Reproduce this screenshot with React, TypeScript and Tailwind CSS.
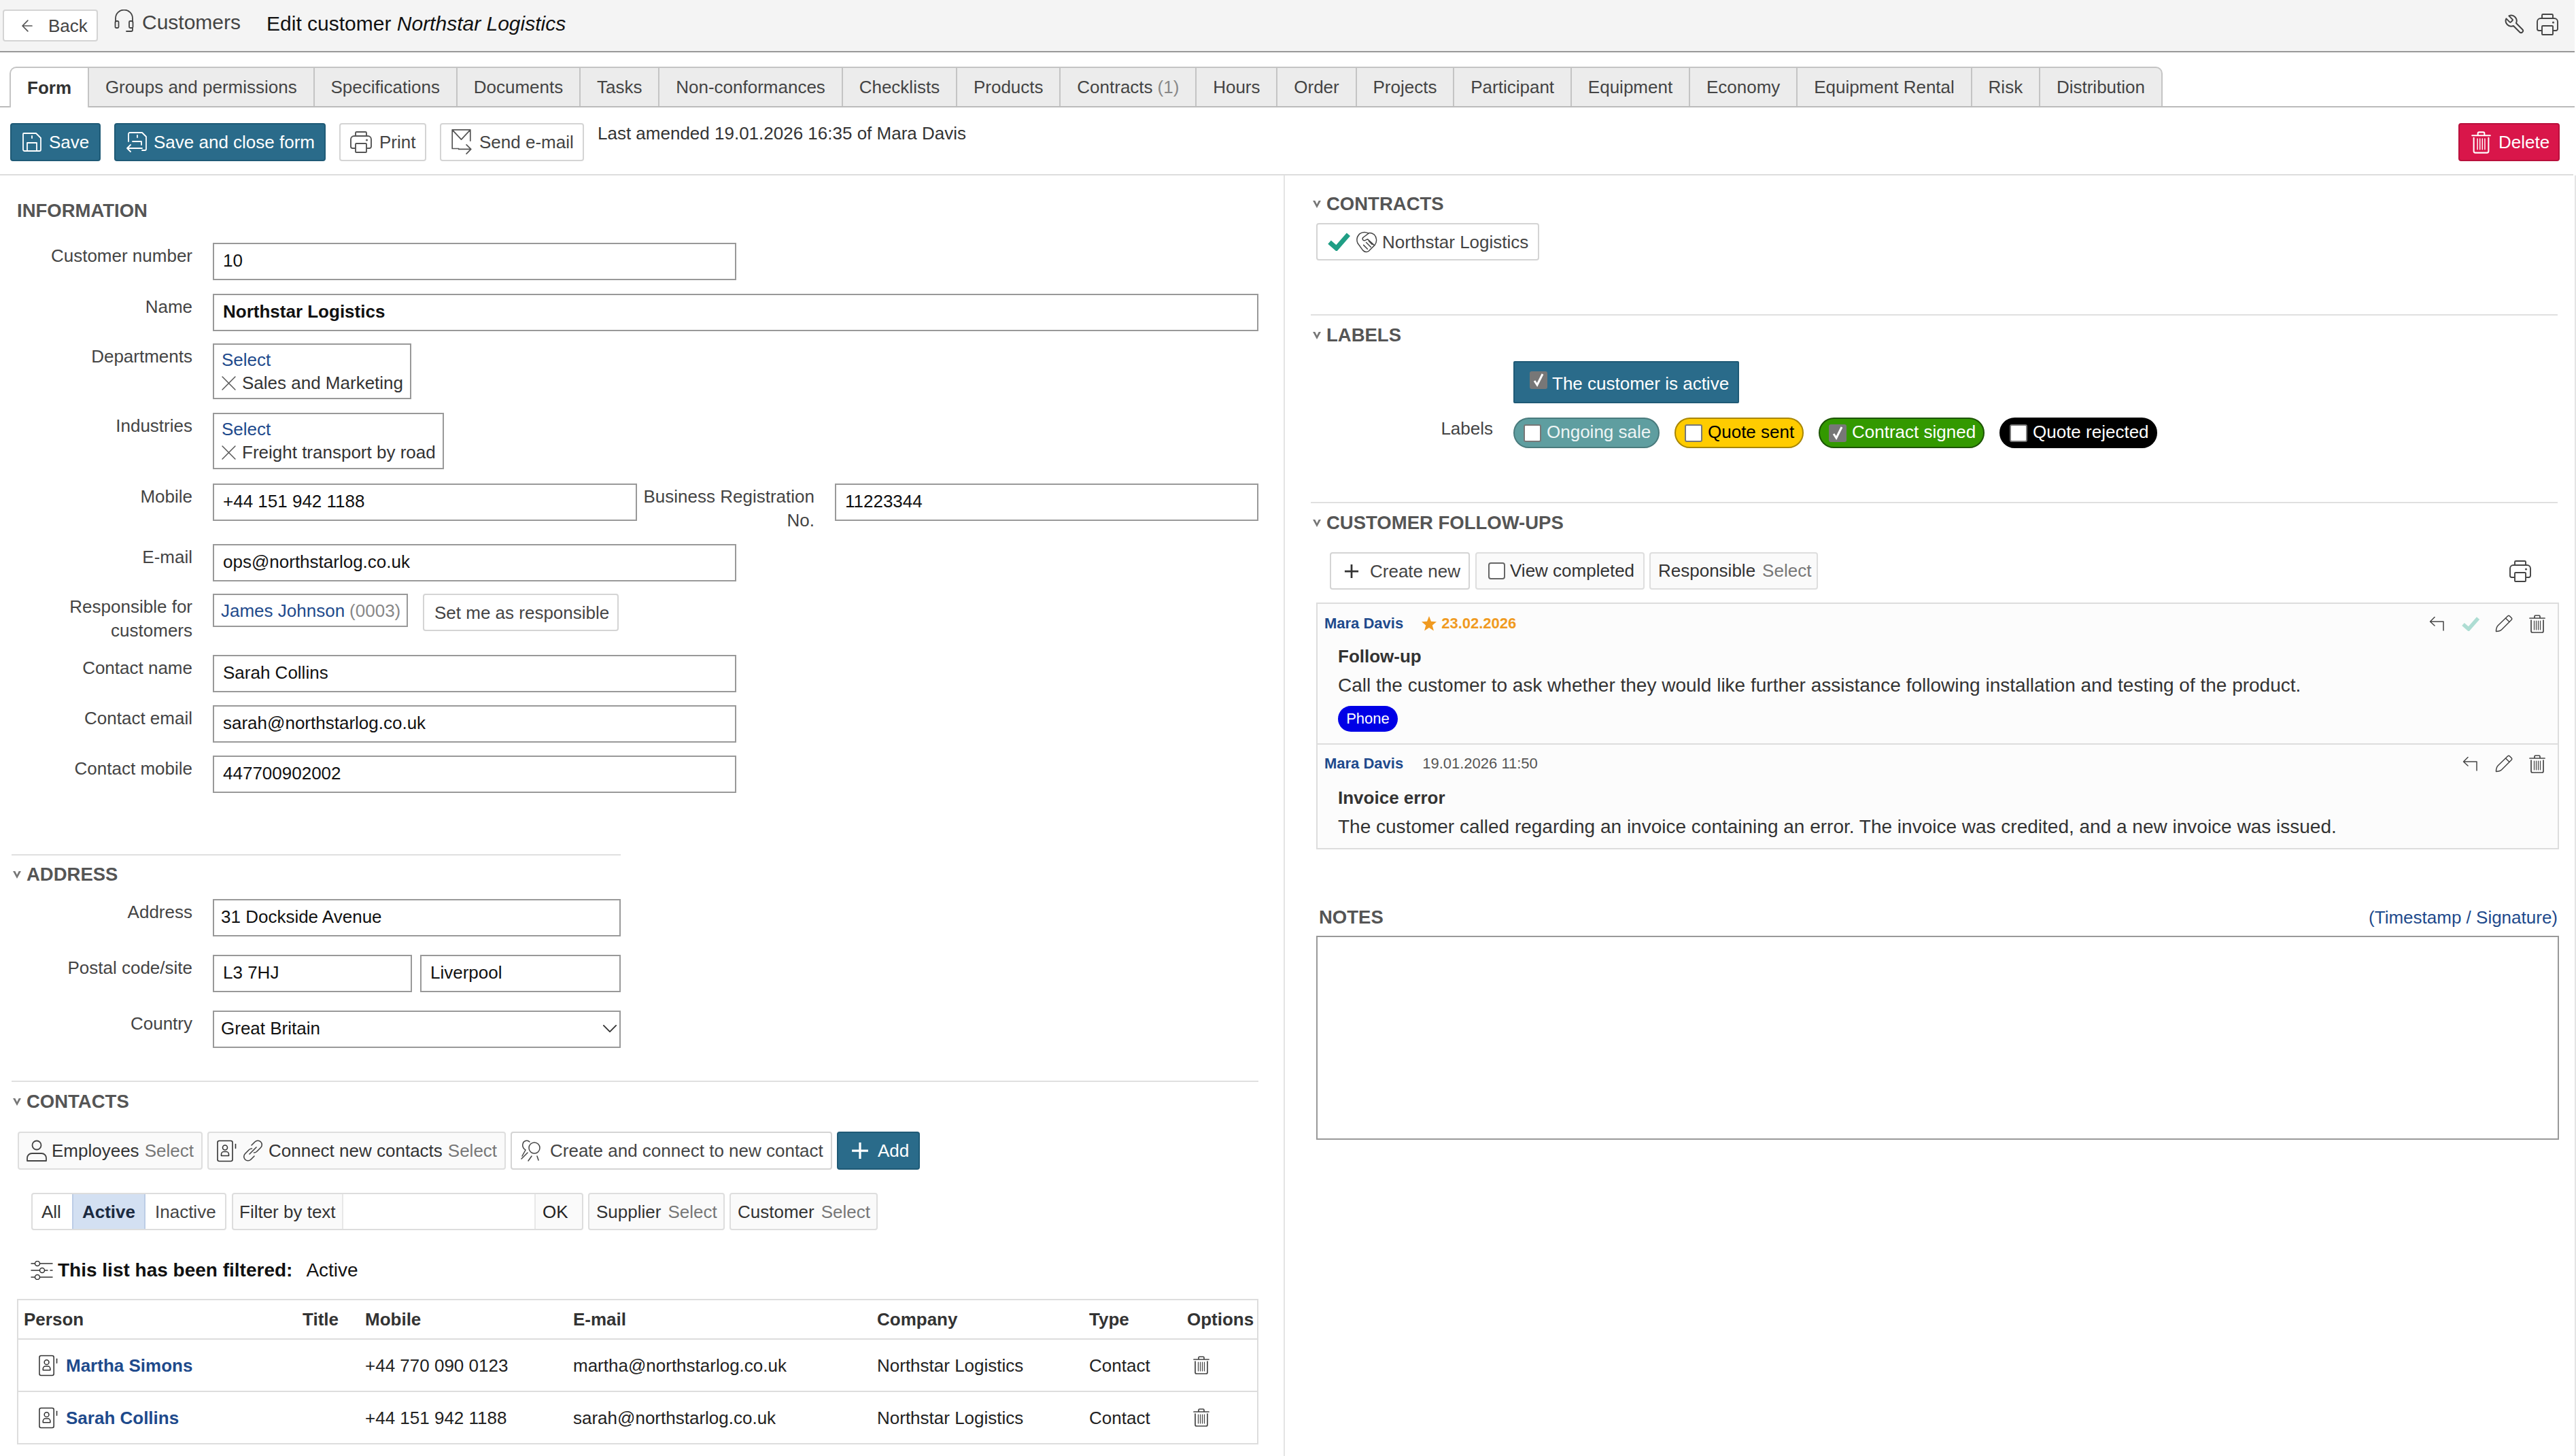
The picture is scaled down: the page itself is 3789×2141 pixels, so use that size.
import React from "react";

type IconProps = { className?: string };

const Line = ({ className, vb, children, sw = 2 }: { className?: string; vb: string; children: React.ReactNode; sw?: number }) => (
  <svg className={className} viewBox={vb} fill="none" stroke="currentColor" strokeWidth={sw} strokeLinecap="round" strokeLinejoin="round">
    {children}
  </svg>
);

const ArrowLeftIcon = ({ className }: IconProps) => (
  <Line className={className} vb="0 0 20 30"><path d="M18 15H2M11 6l-9 9 9 9" /></Line>
);
const HeadsetIcon = ({ className }: IconProps) => (
  <Line className={className} vb="0 0 29 33" sw={1.8}>
    <path d="M2 18V13a12.5 12.5 0 0 1 25 0v5" />
    <rect x="1.5" y="17" width="5" height="10" rx="1.5" />
    <rect x="22" y="17" width="5.5" height="10" rx="1.5" />
    <path d="M27 27v3a2 2 0 0 1-2 2h-7" />
  </Line>
);
const WrenchIcon = ({ className }: IconProps) => (
  <Line className={className} vb="0 0 24 24" sw={1.5}>
    <g transform="translate(24,0) scale(-1,1)">
      <path d="M14.7 6.3a1 1 0 0 0 0 1.4l1.6 1.6a1 1 0 0 0 1.4 0l3.77-3.77a6 6 0 0 1-7.94 7.94l-6.91 6.91a2.12 2.12 0 0 1-3-3l6.91-6.91a6 6 0 0 1 7.94-7.94l-3.76 3.76z" />
    </g>
  </Line>
);
const PrinterIcon = ({ className }: IconProps) => (
  <Line className={className} vb="0 0 32 32" sw={1.9}>
    <path d="M8 7V2.5a1.5 1.5 0 0 1 1.5-1.5h13A1.5 1.5 0 0 1 24 2.5V7" />
    <path d="M7 25H3.5A2.5 2.5 0 0 1 1 22.5V12a5 5 0 0 1 5-5h20a5 5 0 0 1 5 5v10.5a2.5 2.5 0 0 1-2.5 2.5H25" />
    <rect x="8" y="18" width="16" height="13" rx="1" />
    <circle cx="24.5" cy="13" r=".6" />
  </Line>
);
const SaveIcon = ({ className }: IconProps) => (
  <Line className={className} vb="0 0 28 28" sw={1.8}>
    <path d="M2 1h18l7 7v17a2 2 0 0 1-2 2H3a2 2 0 0 1-2-2V2a1 1 0 0 1 1-1z" />
    <path d="M7 27V15h14v12M14 5v3" />
  </Line>
);
const SaveCloseIcon = ({ className }: IconProps) => (
  <Line className={className} vb="0 0 31 30" sw={1.8}>
    <path d="M4 14V3a2 2 0 0 1 2-2h18l6 6v18a2 2 0 0 1-2 2h-4" />
    <path d="M17 5v3M10 14h13v5M24 24H2M7 19l-5 5 5 5" />
  </Line>
);
const MailSendIcon = ({ className }: IconProps) => (
  <Line className={className} vb="0 0 32 40" sw={1.8}>
    <path d="M2 25V1h28v17M2 1l14 15L30 1M2 25v5h10M12 31h18M24 24l7 7-7 7" />
  </Line>
);
const TrashIcon = ({ className }: IconProps) => (
  <Line className={className} vb="0 0 24 27" sw={1.7}>
    <path d="M1 5h22M8 5V2.5A1.5 1.5 0 0 1 9.5 1h5A1.5 1.5 0 0 1 16 2.5V5" />
    <path d="M3 8v16a2 2 0 0 0 2 2h14a2 2 0 0 0 2-2V8" />
    <path d="M7.5 9v13M10.5 9v13M13.5 9v13M16.5 9v13" strokeWidth="1.2" />
  </Line>
);
const ReplyIcon = ({ className }: IconProps) => (
  <Line className={className} vb="0 0 22 22" sw={1.5}>
    <path d="M21 21V8H2M8 1.5L1.5 8 8 14" />
  </Line>
);
const CheckIcon = ({ className }: IconProps) => (
  <svg className={className} viewBox="0 0 26 21" fill="none" stroke="currentColor" strokeWidth="5.5">
    <path d="M2 11l8 7L24 2" />
  </svg>
);
const PencilIcon = ({ className }: IconProps) => (
  <Line className={className} vb="0 0 26 26" sw={1.5}>
    <path d="M1.5 24.5c0-4 1-7 3-9L18.5 2c1-1 2-1 3 0l2.5 2.5c1 1 1 2 0 3L10 21.5c-2 2-5 3-8.5 3z" />
    <path d="M15.5 5l5.5 5.5" />
  </Line>
);
const PlusIcon = ({ className }: IconProps) => (
  <svg className={className} viewBox="0 0 24 24" fill="none" stroke="currentColor" strokeWidth="3">
    <path d="M12 1v22M1 12h22" />
  </svg>
);
const XIcon = ({ className }: IconProps) => (
  <Line className={className} vb="0 0 20 20" sw={1.4}><path d="M1 1l18 18M19 1L1 19" /></Line>
);
const PersonIcon = ({ className }: IconProps) => (
  <Line className={className} vb="0 0 30 32" sw={1.8}>
    <circle cx="15" cy="8" r="6.5" />
    <path d="M1 31v-4c0-4 3-7 7-7h14c4 0 7 3 7 7v4z" />
  </Line>
);
const ContactBookIcon = ({ className }: IconProps) => (
  <Line className={className} vb="0 0 29 32" sw={1.6}>
    <rect x="1" y="1" width="22" height="30" rx="2.5" />
    <circle cx="12" cy="11" r="3.5" />
    <path d="M6.5 23v-2c0-2 1.500-4 3.500-4h4c2 0 3.500 2 3.500 4v2z" />
    <path d="M27.5 6v6" />
  </Line>
);
const LinkIcon = ({ className }: IconProps) => (
  <Line className={className} vb="0 0 32 32" sw={1.6}>
    <path d="M14 8l5-5a6 6 0 0 1 8.5 8.5l-6 6a6 6 0 0 1-4 1.5" />
    <path d="M18 24l-5 5a6 6 0 0 1-8.5-8.5l6-6a6 6 0 0 1 4-1.5" />
    <path d="M11 21l10-10" />
  </Line>
);
const NewContactIcon = ({ className }: IconProps) => (
  <Line className={className} vb="0 0 34 32" sw={1.5}>
    <circle cx="20" cy="12" r="8" />
    <path d="M13 3C10 0 4 1 3 6c-1 4 1 7 4 9M7 15l-5 9M1 28l9-9M16 24l-5 7M24 24l2 6" />
  </Line>
);
const HandshakeIcon = ({ className }: IconProps) => (
  <Line className={className} vb="0 0 33 33" sw={1.5}>
    <path d="M19 3C15 1 10 1 6 4 2 8 1 13 3 18l8 11c3 3 6 3 9 1l9-9c4-5 3-12-1-16-3-2-6-3-9-2" />
    <path d="M20 3l-8 6c-3 2-1 6 2 5l4-2 10 9M12 21l6 6M16 17l7 7M20 15l5 5" />
  </Line>
);
const SlidersIcon = ({ className }: IconProps) => (
  <Line className={className} vb="0 0 33 28" sw={1.5}>
    <path d="M1 4h5M14 4h18M1 14h12M21 14h4M29 14h3M1 24h5M14 24h18" />
    <circle cx="10" cy="4" r="3.5" />
    <circle cx="17" cy="14" r="3.5" />
    <circle cx="10" cy="24" r="3.5" />
  </Line>
);
const StarIcon = ({ className }: IconProps) => (
  <svg className={className} viewBox="0 0 24 24" fill="currentColor">
    <path d="M12 0l3.3 8.500 8.700.5-6.800 5.600 2.300 8.900L12 18.500l-7.500 5 2.300-8.900L0 9l8.700-.5z" />
  </svg>
);
const ChevronIcon = ({ className }: IconProps) => (
  <Line className={className} vb="0 0 24 14" sw={2}><path d="M2 2l10 10L22 2" /></Line>
);
const Caret = () => (
  <svg className="w-[12px] h-[13px] shrink-0 text-[#777]" viewBox="0 0 11 12" fill="currentColor">
    <path d="M0 1h3l2.500 5L8 1h3L5.500 11z" />
  </svg>
);

const ActionButton = ({ children, variant, className = "" }: { children: React.ReactNode; variant: "primary" | "plain" | "grey" | "danger"; className?: string }) => {
  const tone =
    variant === "primary"
      ? "bg-[#2a6b8a] border-[#1f5a76] text-white"
      : variant === "danger"
      ? "bg-[#d9164a] border-[#b9103c] text-white"
      : variant === "grey"
      ? "bg-[#fafafa] border-[#dedede] text-[#333]"
      : "bg-white border-[#d4d4d4] text-[#444]";
  return <div className={`flex items-center rounded-[4px] border-2 whitespace-nowrap shrink-0 ${tone} ${className}`}>{children}</div>;
};

const FormRow = ({ label, className = "", children }: { label: string; className?: string; children: React.ReactNode }) => (
  <div className={`flex ${className}`}>
    <div className="w-[283px] shrink-0 text-right pt-[2px] leading-[35px] text-[#444]">{label}</div>
    <div className="ml-[30px] flex-1 flex min-w-0">{children}</div>
  </div>
);

const Field = ({ children, className = "", pad = "px-[13px]" }: { children: React.ReactNode; className?: string; pad?: string }) => (
  <div className={`h-[55px] border-2 border-[#999] bg-white flex items-center pb-[3px] text-[#111] shrink-0 ${pad} ${className}`}>{children}</div>
);

const SectionTitle = ({ children, className = "" }: { children: React.ReactNode; className?: string }) => (
  <div className={`flex items-center h-[32px] gap-[8px] text-[27.5px] font-bold text-[#555] leading-[32px] ${className}`}>
    <Caret />
    <span>{children}</span>
  </div>
);

const Rule = ({ className = "" }: { className?: string }) => <div className={`h-[2px] bg-[#e0e0e0] ${className}`} />;

const tabs: [string, string?][] = [
  ["Groups and permissions"],
  ["Specifications"],
  ["Documents"],
  ["Tasks"],
  ["Non-conformances"],
  ["Checklists"],
  ["Products"],
  ["Contracts", "(1)"],
  ["Hours"],
  ["Order"],
  ["Projects"],
  ["Participant"],
  ["Equipment"],
  ["Economy"],
  ["Equipment Rental"],
  ["Risk"],
  ["Distribution"],
];

const contacts = [
  ["Martha Simons", "+44 770 090 0123", "martha@northstarlog.co.uk"],
  ["Sarah Collins", "+44 151 942 1188", "sarah@northstarlog.co.uk"],
];

const LabelBox = ({ checked }: { checked?: boolean }) => (
  <span className={`w-[26px] h-[26px] rounded-[3px] shrink-0 flex items-center justify-center border-2 ${checked ? "bg-[#777] border-[#777] text-white" : "bg-white border-[#777]"}`}>
    {checked ? (
      <svg className="w-[16px] h-[20px]" viewBox="0 0 16 20" fill="none" stroke="currentColor" strokeWidth="3">
        <path d="M2 11l4 6L14 1" />
      </svg>
    ) : null}
  </span>
);

const Pill = ({ tone, checked, children }: { tone: string; checked?: boolean; children: React.ReactNode }) => (
  <div className={`h-[45px] rounded-full border-2 flex items-center pl-[13px] gap-[8px] text-[26px] whitespace-nowrap shrink-0 ${tone}`}>
    <LabelBox checked={checked} />
    <span className="pb-[4px]">{children}</span>
  </div>
);

export default function App() {
  return (
    <div className="w-[3789px] h-[2141px] overflow-hidden bg-white text-[26px] leading-[32px] text-[#333] [font-family:'Liberation_Sans',Arial,sans-serif]">
      {/* Top bar */}
      <div className="h-[77px] mr-[2px] bg-[#f4f4f4] border-b-2 border-[#999] flex items-start">
        <ActionButton variant="plain" className="ml-[4px] mt-[14px] h-[47px] w-[140px] pl-[24px]">
          <ArrowLeftIcon className="w-[20px] h-[26px] text-[#555]" />
          <span className="ml-[21px]">Back</span>
        </ActionButton>
        <HeadsetIcon className="ml-[24px] mt-[14px] w-[29px] h-[33px] text-[#444]" />
        <span className="ml-[12px] mt-[17px] text-[30px] text-[#444]">Customers</span>
        <span className="ml-[38px] mt-[19px] text-[30px] text-[#111]">
          Edit customer <em>Northstar Logistics</em>
        </span>
        <div className="ml-auto mr-[24px] mt-[20px] flex items-start gap-[16px] text-[#444]">
          <WrenchIcon className="w-[32px] h-[32px]" />
          <PrinterIcon className="w-[32px] h-[32px]" />
        </div>
      </div>

      {/* Tabs */}
      <div className="mt-[21px] h-[60px] mr-[2px] pl-[14px] border-b-2 border-[#bbb] flex items-stretch">
        <div className="-mb-[2px] h-[60px] px-[24px] bg-white border-t-2 border-l-2 border-r-2 border-[#c4c4c4] rounded-tl-[10px] flex items-center font-bold text-[#333]">Form</div>
        {tabs.map(([name, count], i) => (
          <div
            key={name}
            className={`h-[58px] px-[23.9px] bg-[#ececec] border-t-2 border-r-2 border-[#c4c4c4] flex items-center text-[#444] whitespace-nowrap ${i === tabs.length - 1 ? "rounded-tr-[10px]" : ""}`}
          >
            {name}
            {count ? <span className="ml-[7px] text-[#888]">{count}</span> : null}
          </div>
        ))}
      </div>

      {/* Action bar */}
      <div className="h-[100px] mr-[4px] pl-[15px] pr-[20px] pt-[23px] border-b-2 border-[#ddd] flex items-start">
        <ActionButton variant="primary" className="h-[56px] w-[133px] pl-[16px]">
          <SaveIcon className="w-[28px] h-[28px]" />
          <span className="ml-[11px]">Save</span>
        </ActionButton>
        <ActionButton variant="primary" className="ml-[20px] h-[56px] w-[311px] pl-[15px]">
          <SaveCloseIcon className="w-[31px] h-[30px]" />
          <span className="ml-[10px]">Save and close form</span>
        </ActionButton>
        <ActionButton variant="plain" className="ml-[20px] h-[56px] w-[128px] pl-[14px]">
          <PrinterIcon className="w-[32px] h-[32px] text-[#555]" />
          <span className="ml-[11px]">Print</span>
        </ActionButton>
        <ActionButton variant="plain" className="ml-[20px] h-[56px] w-[212px] pl-[14px]">
          <MailSendIcon className="w-[31px] h-[38px] text-[#555]" />
          <span className="ml-[11px]">Send e-mail</span>
        </ActionButton>
        <span className="ml-[20px] -mt-[1px] text-[#333]">Last amended 19.01.2026 16:35 of Mara Davis</span>
        <ActionButton variant="danger" className="ml-auto h-[56px] w-[149px] pl-[17px]">
          <TrashIcon className="w-[29px] h-[33px]" />
          <span className="ml-[11px]">Delete</span>
        </ActionButton>
      </div>

      <div className="flex h-[1883px]">
        {/* Left column */}
        <div className="w-[1890px] shrink-0 border-r-2 border-[#e4e4e4] pt-[36px]">
          <div className="ml-[25px] h-[32px] text-[27.5px] font-bold text-[#555]">INFORMATION</div>

          <FormRow label="Customer number" className="mt-[31px]">
            <Field className="w-[770px]">10</Field>
          </FormRow>
          <FormRow label="Name" className="mt-[20px]">
            <Field className="w-[1538px] font-bold">Northstar Logistics</Field>
          </FormRow>
          <FormRow label="Departments" className="mt-[18px]">
            <div className="w-[292px] h-[82px] border-2 border-[#999] pl-[11px] pr-[8px] pt-[5px] leading-[34px] whitespace-nowrap">
              <div className="text-[#1e4a8c]">Select</div>
              <div className="flex items-center text-[#333]">
                <XIcon className="w-[21px] h-[21px] mr-[9px] text-[#555]" />
                Sales and Marketing
              </div>
            </div>
          </FormRow>
          <FormRow label="Industries" className="mt-[20px]">
            <div className="w-[340px] h-[83px] border-2 border-[#999] pl-[11px] pr-[8px] pt-[5px] leading-[34px] whitespace-nowrap">
              <div className="text-[#1e4a8c]">Select</div>
              <div className="flex items-center text-[#333]">
                <XIcon className="w-[21px] h-[21px] mr-[9px] text-[#555]" />
                Freight transport by road
              </div>
            </div>
          </FormRow>
          <div className="mt-[21px] flex h-[55px]">
            <div className="w-[283px] shrink-0 text-right pt-[2px] leading-[35px] text-[#444]">Mobile</div>
            <Field className="ml-[30px] w-[624px]">+44 151 942 1188</Field>
            <div className="ml-[9px] w-[252px] pt-[2px] leading-[35px] text-right text-[#444]">Business Registration No.</div>
            <Field className="ml-[30px] w-[623px]">11223344</Field>
          </div>
          <FormRow label="E-mail" className="mt-[34px]">
            <Field className="w-[770px]">ops@northstarlog.co.uk</Field>
          </FormRow>
          <FormRow label="Responsible for customers" className="mt-[18px] h-[72px]">
            <div className="w-[287px] h-[49px] border-2 border-[#999] flex items-center px-[10px] whitespace-nowrap">
              <span className="text-[#1e4a8c]">James Johnson</span>
              <span className="ml-[7px] text-[#888]">(0003)</span>
            </div>
            <ActionButton variant="plain" className="ml-[22px] h-[55px] w-[288px] pl-[15px]">Set me as responsible</ActionButton>
          </FormRow>
          <FormRow label="Contact name" className="mt-[18px]">
            <Field className="w-[770px]">Sarah Collins</Field>
          </FormRow>
          <FormRow label="Contact email" className="mt-[19px]">
            <Field className="w-[770px]">sarah@northstarlog.co.uk</Field>
          </FormRow>
          <FormRow label="Contact mobile" className="mt-[19px]">
            <Field className="w-[770px]">447700902002</Field>
          </FormRow>

          <Rule className="mt-[90px] ml-[17px] w-[896px]" />
          <SectionTitle className="mt-[12px] ml-[19px]">ADDRESS</SectionTitle>
          <FormRow label="Address" className="mt-[20px]">
            <Field className="w-[600px]" pad="px-[10px]">31 Dockside Avenue</Field>
          </FormRow>
          <FormRow label="Postal code/site" className="mt-[27px]">
            <Field className="w-[293px]">L3 7HJ</Field>
            <Field className="ml-[12px] w-[295px]">Liverpool</Field>
          </FormRow>
          <FormRow label="Country" className="mt-[27px]">
            <Field className="w-[600px] justify-between" pad="pl-[10px] pr-[3px]">
              Great Britain
              <ChevronIcon className="w-[22px] h-[13px] text-[#333]" />
            </Field>
          </FormRow>

          <Rule className="mt-[48px] ml-[17px] w-[1834px]" />
          <SectionTitle className="mt-[13px] ml-[19px]">CONTACTS</SectionTitle>

          <div className="mt-[28px] ml-[26px] flex gap-[7px]">
            <ActionButton variant="grey" className="h-[56px] w-[272px] pl-[11px]">
              <PersonIcon className="w-[30px] h-[32px] text-[#444]" />
              <span className="ml-[7px]">Employees</span>
              <span className="ml-[8px] text-[#777]">Select</span>
            </ActionButton>
            <ActionButton variant="grey" className="h-[56px] w-[439px] pl-[12px]">
              <ContactBookIcon className="w-[29px] h-[33px] text-[#333]" />
              <LinkIcon className="ml-[8px] w-[32px] h-[32px] text-[#444]" />
              <span className="ml-[7px]">Connect new contacts</span>
              <span className="ml-[8px] text-[#777]">Select</span>
            </ActionButton>
            <ActionButton variant="plain" className="h-[56px] w-[473px] pl-[13px] text-[#333]">
              <NewContactIcon className="w-[34px] h-[32px] text-[#444]" />
              <span className="ml-[9px]">Create and connect to new contact</span>
            </ActionButton>
            <ActionButton variant="primary" className="h-[56px] w-[122px] pl-[19px]">
              <PlusIcon className="w-[26px] h-[26px]" />
              <span className="ml-[13px]">Add</span>
            </ActionButton>
          </div>

          <div className="mt-[34px] ml-[46px] flex">
            <div className="h-[55px] w-[287px] border-2 border-[#ddd] rounded-[4px] flex overflow-hidden">
              <div className="w-[58px] pl-[13px] flex items-center text-[#333]">All</div>
              <div className="w-[108px] bg-[#d3e0f2] border-x-2 border-[#bccde6] flex items-center justify-center font-bold text-[#1b2a40]">Active</div>
              <div className="flex-1 pl-[14px] flex items-center text-[#444]">Inactive</div>
            </div>
            <div className="ml-[8px] h-[55px] w-[517px] border-2 border-[#ddd] rounded-[4px] bg-[#fafafa] flex">
              <div className="w-[162px] pl-[9px] flex items-center border-r-2 border-[#e8e8e8] text-[#333]">Filter by text</div>
              <div className="w-[281px] bg-white" />
              <div className="flex-1 border-l-2 border-[#e8e8e8] flex items-center pl-[10px] text-[#222]">OK</div>
            </div>
            <ActionButton variant="grey" className="ml-[7px] h-[55px] w-[201px] pl-[10px]">
              Supplier<span className="ml-[10px] text-[#777]">Select</span>
            </ActionButton>
            <ActionButton variant="grey" className="ml-[7px] h-[55px] w-[218px] pl-[10px]">
              Customer<span className="ml-[10px] text-[#777]">Select</span>
            </ActionButton>
          </div>

          <div className="mt-[43px] ml-[45px] flex items-center h-[32px] text-[28px] text-[#111]">
            <SlidersIcon className="w-[33px] h-[28px] text-[#333]" />
            <span className="ml-[7px] font-bold">This list has been filtered:</span>
            <span className="ml-[20px]">Active</span>
          </div>

          <table className="mt-[26px] ml-[25px] w-[1826px] table-fixed border-2 border-[#ddd] border-collapse text-[#222]">
            <colgroup>
              <col className="w-[411px]" />
              <col className="w-[91px]" />
              <col className="w-[306px]" />
              <col className="w-[447px]" />
              <col className="w-[312px]" />
              <col className="w-[144px]" />
              <col />
            </colgroup>
            <thead>
              <tr className="h-[58px] border-b-2 border-[#ddd] text-left">
                {["Person", "Title", "Mobile", "E-mail", "Company", "Type", "Options"].map((h, i) => (
                  <th key={h} className={`font-bold text-[#333] ${i < 2 ? "pl-[8px]" : "pl-[9px]"}`}>{h}</th>
                ))}
              </tr>
            </thead>
            <tbody>
              {contacts.map(([name, mobile, mail]) => (
                <tr key={name} className="h-[77px] border-b-2 border-[#ddd]">
                  <td className="pl-[30px]">
                    <div className="flex items-center">
                      <ContactBookIcon className="w-[28px] h-[32px] text-[#333]" />
                      <span className="ml-[12px] font-bold text-[#1e4a8c]">{name}</span>
                    </div>
                  </td>
                  <td />
                  <td className="pl-[9px]">{mobile}</td>
                  <td className="pl-[9px]">{mail}</td>
                  <td className="pl-[9px]">Northstar Logistics</td>
                  <td className="pl-[9px]">Contact</td>
                  <td className="pl-[18px]">
                    <TrashIcon className="w-[24px] h-[27px] text-[#444]" />
                  </td>
                </tr>
              ))}
            </tbody>
          </table>
        </div>

        {/* Right column */}
        <div className="flex-1 min-w-0 border-r-2 border-[#e4e4e4] pt-[26px]">
          <SectionTitle className="ml-[41px]">CONTRACTS</SectionTitle>
          <ActionButton variant="plain" className="mt-[12px] ml-[46px] h-[55px] w-[328px] pl-[15px] text-[#333]">
            <CheckIcon className="w-[33px] h-[27px] text-[#1f9e85]" />
            <HandshakeIcon className="ml-[8px] w-[32px] h-[32px] text-[#444]" />
            <span className="ml-[7px]">Northstar Logistics</span>
          </ActionButton>
          <Rule className="mt-[79px] ml-[38px] w-[1834px]" />
          <SectionTitle className="mt-[13px] ml-[41px]">LABELS</SectionTitle>
          <div className="mt-[22px] ml-[336px] w-[332px] h-[62px] bg-[#2a6b8a] border-2 border-[#1f5a76] rounded-[2px] flex items-center pl-[22px] gap-[7px] text-white whitespace-nowrap">
            <span className="-mt-[6px]">
              <LabelBox checked />
            </span>
            <span className="mt-[4px]">The customer is active</span>
          </div>
          <div className="mt-[21px] flex">
            <div className="w-[306px] text-right text-[#444] -mt-[1px] leading-[35px]">Labels</div>
            <div className="ml-[30px] flex gap-[22px]">
              <Pill tone="w-[215px] bg-[#5f9ea0] border-[#4a7b7d] text-[#eef5f5]">Ongoing sale</Pill>
              <Pill tone="w-[190px] bg-[#ffcc00] border-[#a88600] text-black">Quote sent</Pill>
              <Pill tone="w-[244px] bg-[#339900] border-[#1c5400] text-white" checked>Contract signed</Pill>
              <Pill tone="w-[232px] bg-black border-black text-white">Quote rejected</Pill>
            </div>
          </div>
          <Rule className="mt-[79px] ml-[38px] w-[1834px]" />
          <SectionTitle className="mt-[13px] ml-[41px]">CUSTOMER FOLLOW-UPS</SectionTitle>

          <div className="mt-[27px] ml-[66px] pr-[64px] flex items-center">
            <ActionButton variant="plain" className="h-[55px] w-[206px] pl-[19px] text-[#333]">
              <PlusIcon className="w-[22px] h-[22px] text-[#333]" />
              <span className="ml-[16px]">Create new</span>
            </ActionButton>
            <ActionButton variant="grey" className="ml-[8px] h-[55px] w-[249px] pl-[17px]">
              <span className="w-[25px] h-[25px] border-2 border-[#666] rounded-[4px] bg-white" />
              <span className="ml-[7px] pb-[2px]">View completed</span>
            </ActionButton>
            <ActionButton variant="grey" className="ml-[7px] h-[55px] w-[248px] pl-[11px]">
              <span className="pb-[2px]">Responsible<span className="ml-[10px] text-[#777]">Select</span></span>
            </ActionButton>
            <PrinterIcon className="ml-auto w-[32px] h-[32px] text-[#444]" />
          </div>

          <div className="mt-[19px] ml-[46px] w-[1828px] border-2 border-[#ddd] bg-[#fcfcfc]">
            <div className="border-b-2 border-[#ddd] pt-[14px] pb-[17px]">
              <div className="h-[30px] pl-[10px] pr-[18px] flex items-center text-[22px] font-bold">
                <span className="text-[#1e4a8c]">Mara Davis</span>
                <StarIcon className="ml-[27px] w-[22px] h-[24px] text-[#f09a20]" />
                <span className="ml-[7px] text-[#f09a20]">23.02.2026</span>
                <div className="ml-auto flex items-center text-[#444]">
                  <ReplyIcon className="w-[22px] h-[22px]" />
                  <CheckIcon className="ml-[26px] w-[26px] h-[21px] text-[#aeddd3]" />
                  <PencilIcon className="ml-[23px] w-[26px] h-[26px]" />
                  <TrashIcon className="ml-[24px] w-[24px] h-[27px]" />
                </div>
              </div>
              <div className="mt-[17px] pl-[30px] font-bold">Follow-up</div>
              <div className="mt-[11px] pl-[30px] text-[28px]">Call the customer to ask whether they would like further assistance following installation and testing of the product.</div>
              <div className="mt-[14px] ml-[30px] w-[88px] h-[38px] rounded-full bg-[#0000e6] text-white text-[22px] flex items-center justify-center">Phone</div>
            </div>
            <div className="pt-[13px] pb-[15px]">
              <div className="h-[30px] pl-[10px] pr-[18px] flex items-center text-[22px]">
                <span className="font-bold text-[#1e4a8c]">Mara Davis</span>
                <span className="ml-[28px] text-[#555]">19.01.2026 11:50</span>
                <div className="ml-auto flex items-center text-[#444]">
                  <ReplyIcon className="w-[22px] h-[22px]" />
                  <PencilIcon className="ml-[26px] w-[26px] h-[26px]" />
                  <TrashIcon className="ml-[24px] w-[24px] h-[27px]" />
                </div>
              </div>
              <div className="mt-[19px] pl-[30px] font-bold">Invoice error</div>
              <div className="mt-[11px] pl-[30px] text-[28px]">The customer called regarding an invoice containing an error. The invoice was credited, and a new invoice was issued.</div>
            </div>
          </div>

          <div className="mt-[84px] ml-[50px] w-[1822px] h-[32px] flex items-center justify-between">
            <span className="text-[27.5px] font-bold text-[#555]">NOTES</span>
            <span className="text-[#1e4a8c]">(Timestamp / Signature)</span>
          </div>
          <div className="mt-[11px] ml-[46px] w-[1828px] h-[300px] border-2 border-[#999]" />
        </div>
      </div>
    </div>
  );
}
